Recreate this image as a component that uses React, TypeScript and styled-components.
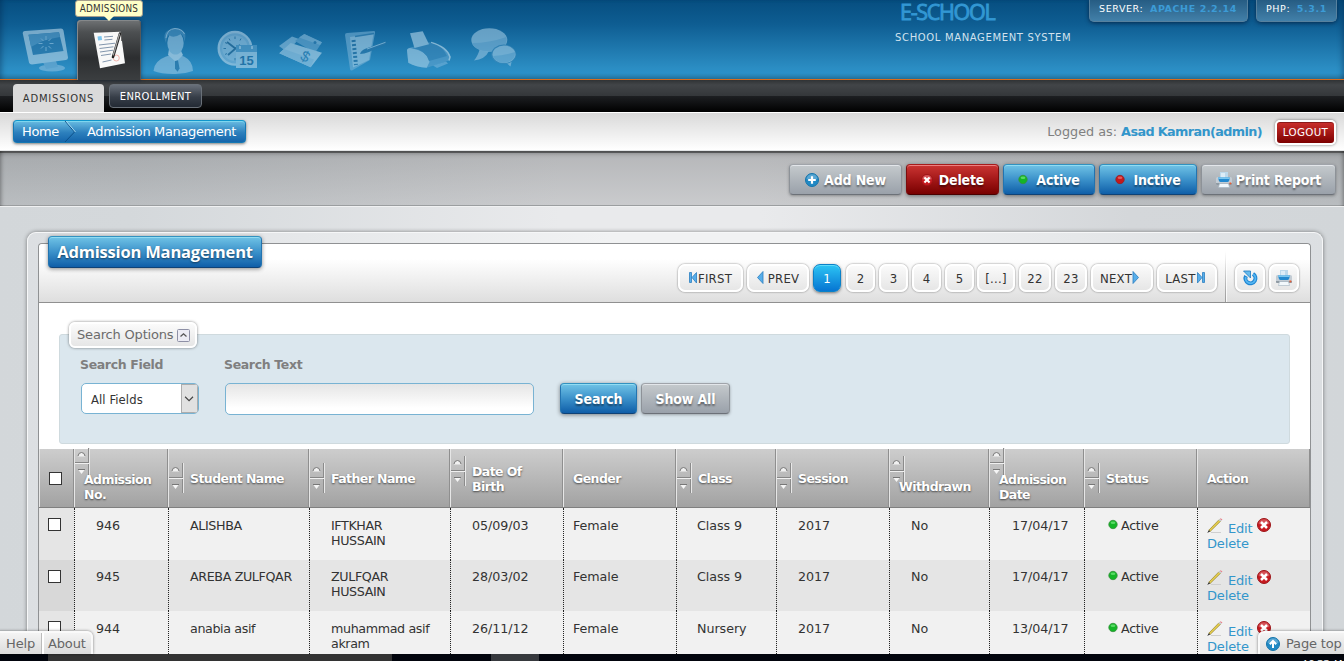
import React from "react";
import styled, { createGlobalStyle, css } from "styled-components";

const GlobalStyle = createGlobalStyle`
  * { box-sizing: border-box; }
  html, body { margin: 0; padding: 0; overflow: hidden; }
  body { font-family: "DejaVu Sans", Verdana, sans-serif; font-size: 13px; color: #333; }
`;

const Screen = styled.div`
  width: 1344px;
  height: 661px;
  overflow: hidden;
  display: flex;
  flex-direction: column;
  background: linear-gradient(90deg, #d3d7da 0, #d4d8db 130px, #e9eaec 560px, #e9eaec 760px, #d4d7da 1130px, #d2d6d9 100%);
`;

/* ---------- Header ---------- */

const Header = styled.header`
  height: 80px;
  flex: none;
  display: flex;
  padding-left: 13px;
  border-bottom: 1px solid #d86c1c;
  background: linear-gradient(#064e80 0, #0e5d92 24px, #2b8dc3 68px, #2b90c8 73px, #27769f 79px);
  box-shadow: inset 5px 0 5px -3px rgba(0, 30, 60, 0.35), inset -5px 0 5px -3px rgba(0, 30, 60, 0.35);
`;

const NavItem = styled.div<{ $active?: boolean }>`
  position: relative;
  width: 64px;
  height: 60px;
  margin-top: 20px;
  svg { display: block; opacity: ${(p) => (p.$active ? 1 : 0.56)}; }
  ${(p) =>
    p.$active &&
    css`
      background: linear-gradient(#707375 0, #4d5052 12px, #2c2e30 38px, #3b3e40 60px);
      border-radius: 4px 4px 0 0;
      box-shadow: inset 1px 1px 0 #85888a, inset -1px 0 0 #55585a, 0 0 4px rgba(0, 20, 50, 0.5);
    `}
`;

const Tooltip = styled.div`
  position: absolute;
  left: -2px;
  top: -20px;
  width: 68px;
  height: 17px;
  border: 1px solid #a59d8c;
  border-radius: 3px;
  background: #ffffc8;
  color: #333;
  font: 9.8px/15px "DejaVu Sans Condensed", "DejaVu Sans", sans-serif;
  font-stretch: condensed;
  letter-spacing: 0.25px;
  text-align: center;
  white-space: nowrap;
  z-index: 2;
  &::after {
    content: "";
    position: absolute;
    left: 28px;
    top: 15px;
    border: 5px solid transparent;
    border-bottom: 0;
    border-top-color: #ffffc8;
  }
`;

const Brand = styled.div`
  margin-left: 370px;
  width: 194px;
  flex: none;
  display: flex;
  flex-direction: column;
  color: #d2e2ee;
  font-size: 10px;
  line-height: 14px;
  white-space: nowrap;
  letter-spacing: 0.65px;
`;

const BrandName = styled.div`
  margin: 0 0 7px 5px;
  font: 21.5px/24px "Open Sans", sans-serif;
  color: #3297d3;
  letter-spacing: -1.3px;
  -webkit-text-stroke: 0.9px #3297d3;
`;

const Info = styled.div<{ $w: number }>`
  width: ${(p) => p.$w}px;
  height: 22px;
  flex: none;
  margin-right: 8px;
  border: 1px solid #57819e;
  border-top: 0;
  border-radius: 0 0 5px 5px;
  background: linear-gradient(#265c83, #4280a9);
  box-shadow: 0 1px 4px rgba(0, 20, 50, 0.7);
  color: #fff;
  font-size: 9.5px;
  line-height: 17px;
  padding-left: 9px;
  letter-spacing: 0.6px;
  white-space: nowrap;
  b { color: #3c9bd6; margin-left: 3px; }
`;

const TabBar = styled.nav`
  height: 32px;
  flex: none;
  display: flex;
  padding-left: 13px;
  background: linear-gradient(#303335 0, #424548 5px, #34373a 16px, #1d1f22 16px, #000 32px);
`;

const Tab = styled.div<{ $active?: boolean }>`
  font-size: 10px;
  text-align: center;
  ${(p) =>
    p.$active
      ? css`
          width: 91px;
          margin-top: 4px;
          height: 28px;
          line-height: 29px;
          letter-spacing: 0.8px;
          border-radius: 4px 4px 0 0;
          background: #dadada;
          color: #333;
        `
      : css`
          width: 93px;
          height: 24px;
          margin: 4px 0 0 5px;
          line-height: 23px;
          letter-spacing: 0.3px;
          border: 1px solid #697078;
          border-radius: 4px;
          background: linear-gradient(#69707a, #373e48 55%, #232a34);
          color: #fff;
        `}
`;

const CrumbBar = styled.div`
  height: 39px;
  flex: none;
  display: flex;
  align-items: flex-start;
  padding: 8px 8px 0 13px;
  border-top: 1px solid #fff;
  border-bottom: 1px solid #e3e5e6;
  background: linear-gradient(#d9d9d9, #fff);
`;

const Crumbs = styled.div`
  height: 23px;
  width: 233px;
  margin-top: -1px;
  display: flex;
  border: 1px solid #1478b4;
  border-top-color: #1196cc;
  border-radius: 4px;
  background: linear-gradient(#69bce2, #2d80bd 55%, #1465ab);
  box-shadow: 0 1px 3px rgba(0, 0, 0, 0.5), inset 0 1px 0 #7ed6ef;
  color: #fff;
  line-height: 21px;
  padding-left: 8px;
  white-space: nowrap;
  letter-spacing: -0.36px;
  span { width: 42px; }
  svg { flex: none; margin: 0 11px 0 0; }
`;

const Logged = styled.div`
  margin-left: auto;
  color: #808080;
  line-height: 21px;
  font-size: 12.8px;
  letter-spacing: 0;
  b { color: #3396cb; letter-spacing: -0.62px; }
`;

const Logout = styled.div`
  margin: -1px 0 0 13px;
  width: 61px;
  height: 25px;
  border: 2px solid #fff;
  border-radius: 5px;
  background: linear-gradient(#cb302d, #7d0000);
  box-shadow: 0 0 3px rgba(0, 0, 0, 0.5), inset 0 1px 0 #8a1a1a;
  color: #fff;
  font-size: 10.3px;
  line-height: 21px;
  text-align: center;
  letter-spacing: 0.35px;
`;

const Toolbar = styled.div`
  height: 56px;
  flex: none;
  display: flex;
  justify-content: flex-end;
  gap: 4px;
  padding: 13px 8px 0 0;
  border-bottom: 1px solid #f0f1f2;
  background: linear-gradient(#6d6f70 0, #6d6f70 2px, transparent 2px),
    linear-gradient(rgba(80, 82, 85, 0.34), rgba(120, 122, 125, 0.28) 54px, #9da0a2 54px);
  box-shadow: inset 0 6px 5px -4px rgba(0, 0, 0, 0.35), inset 5px 0 4px -4px rgba(0, 0, 0, 0.35), inset -5px 0 4px -4px rgba(0, 0, 0, 0.35);
`;

type Tone = "grey" | "red" | "blue";

const tones: Record<Tone, ReturnType<typeof css>> = {
  grey: css`
    border-color: #a0a4aa #8d9298 #6c7178;
    background: linear-gradient(#c5cacd, #afb5bb 50%, #9aa1aa);
    box-shadow: inset 0 1px 0 #e3e6ea, 0 1px 3px rgba(0, 0, 0, 0.3);
  `,
  red: css`
    border-color: #a61c1c #7c0d0d #4a0000;
    background: linear-gradient(#cb3533, #a31818 50%, #780000);
    box-shadow: inset 0 1px 0 #ec8080, 0 1px 4px rgba(0, 0, 0, 0.45);
  `,
  blue: css`
    border-color: #3292c0 #2374b0 #0f4276;
    background: linear-gradient(#70c3e6, #3b91ca 50%, #0f5ea8);
    box-shadow: inset 0 1px 0 #92dcf2, 0 1px 4px rgba(0, 0, 0, 0.45);
  `,
};

const Button = styled.div<{ $tone: Tone; $w: number; $iconGap?: number }>`
  width: ${(p) => p.$w}px;
  height: 31px;
  flex: none;
  display: flex;
  align-items: center;
  justify-content: center;
  gap: ${(p) => p.$iconGap ?? 5}px;
  border: 1px solid;
  border-radius: 4px;
  color: #fff;
  font: bold 14px "DejaVu Sans Condensed", "DejaVu Sans", sans-serif;
  font-stretch: condensed;
  letter-spacing: -0.15px;
  text-shadow: 0 2px 2px rgba(0, 0, 0, 0.45);
  white-space: nowrap;
  svg { flex: none; }
  ${(p) => tones[p.$tone]}
`;

/* ---------- Widget ---------- */

const Widget = styled.section`
  margin: 25px 21px 0 27px;
  height: 422px;
  flex: none;
  padding: 10px 11px 0 10px;
  border: 1px solid #f6f7f8;
  border-bottom: 0;
  border-radius: 9px 9px 0 0;
  background: linear-gradient(90deg, #dcdfe2, #f1f2f3 45%, #f1f2f3 60%, #dcdfe2);
  box-shadow: 0 0 4px rgba(0, 0, 0, 0.45);
`;

const Panel = styled.div`
  height: 411px;
  border: 1px solid #8f9193;
  border-bottom: 0;
  border-radius: 4px 4px 0 0;
  background: #fff;
  overflow: visible;
`;

const PanelHead = styled.div`
  height: 59px;
  display: flex;
  align-items: flex-start;
  border-bottom: 1px solid #909090;
  border-radius: 4px 4px 0 0;
  background: linear-gradient(#fff 15px, #dedede);
`;

const Title = styled.h1`
  margin: -8px 0 0 9px;
  width: 214px;
  height: 32px;
  border: 1px solid;
  border-radius: 4px;
  color: #fff;
  font: bold 16.5px/30px "Open Sans", "Trebuchet MS", sans-serif;
  text-align: center;
  letter-spacing: -0.18px;
  white-space: nowrap;
  text-shadow: 0 1px 2px rgba(0, 0, 0, 0.5);
  ${tones.blue}
`;

const Pager = styled.div`
  margin: 20px 8px 0 auto;
  display: flex;
`;

const Page = styled.div<{ $w: number; $mr?: number; $pr?: number; $current?: boolean }>`
  width: ${(p) => p.$w}px;
  height: 28px;
  margin-right: ${(p) => p.$mr ?? 4}px;
  padding-right: ${(p) => p.$pr ?? 0}px;
  display: flex;
  align-items: center;
  justify-content: center;
  border: 2px solid #fff;
  border-radius: 7px;
  background: linear-gradient(#fafafa, #e6e6e6);
  box-shadow: 0 0 2px rgba(0, 0, 0, 0.55);
  color: #333;
  font: 13px "DejaVu Sans Condensed", "DejaVu Sans", sans-serif;
  font-stretch: condensed;
  letter-spacing: 0.25px;
  white-space: nowrap;
  svg { flex: none; }
  ${(p) =>
    p.$current &&
    css`
      border: 1px solid #0a81c8;
      background: linear-gradient(#2cc4f4, #0675d2);
      box-shadow: inset 0 1px 0 #5edafa, 0 1px 3px rgba(0, 0, 0, 0.5);
      color: #fff;
    `}
`;

const HeadTools = styled.div`
  height: 58px;
  width: 85px;
  display: flex;
  gap: 4px;
  padding: 20px 0 0 9px;
  border-left: 1px solid;
  border-image: linear-gradient(transparent 8px, #999) 1;
  box-shadow: inset 1px 0 0 rgba(255, 255, 255, 0.8);
`;

const SearchBox = styled.div`
  margin: 31px 20px 5px;
  height: 110px;
  border: 1px solid #cfdade;
  border-radius: 3px;
  background: #dbe7ee;
  padding: 0 0 0 10px;
`;

const Legend = styled.div`
  margin: -13px 0 0 -1px;
  width: 128px;
  height: 26px;
  display: flex;
  align-items: center;
  gap: 4px;
  padding-left: 6px;
  border: 2px solid #fff;
  border-radius: 6px;
  background: linear-gradient(#fbfbfb, #e6e6e6);
  box-shadow: 0 0 3px rgba(0, 0, 0, 0.5);
  color: #6b6b6b;
  line-height: 20px;
  white-space: nowrap;
  letter-spacing: -0.18px;
`;

const Fields = styled.div`
  display: flex;
  align-items: flex-start;
  margin: 8px 0 0 10px;
`;

const Field = styled.div<{ $w: number }>`
  width: ${(p) => p.$w}px;
  color: #7f7f7f;
  font-weight: bold;
  font-size: 12.5px;
  line-height: 17px;
  letter-spacing: -0.35px;
`;

const Select = styled.div`
  margin: 10px 0 0 1px;
  width: 118px;
  height: 31px;
  display: flex;
  justify-content: space-between;
  border: 1px solid #78b3d3;
  border-radius: 5px;
  overflow: hidden;
  background: #fff;
  color: #333;
  font: 12.9px/31px "DejaVu Sans Condensed", "DejaVu Sans", sans-serif;
  font-stretch: condensed;
  letter-spacing: 0.1px;
  padding-left: 9px;
  svg { background: #e1e1e1; border: 1px solid #adadad; }
`;

const TextInput = styled.div`
  margin: 10px 0 0 1px;
  width: 309px;
  height: 32px;
  border: 1px solid #78b3d3;
  border-radius: 5px;
  background: linear-gradient(#e5e5e5, #fff 80%);
`;

const FormButtons = styled.div`
  display: flex;
  gap: 4px;
  margin: 27px 0 0 26px;
`;

/* ---------- Table ---------- */

const columns = "35px 94px 141px 141px 113px 113px 100px 113px 100px 95px 113px 113px";

const HeadRow = styled.div`
  display: grid;
  grid-template-columns: ${columns};
  width: 1271px;
  height: 59px;
  border-bottom: 1px solid #7f7f7f;
  background: linear-gradient(#cdcdcd, #a2a2a2);
`;

const HeadCell = styled.div`
  display: flex;
  align-items: flex-start;
  border-left: 1px solid #e6e6e6;
  border-right: 1px solid #8f8f8f;
  color: #fff;
  font-weight: bold;
  font-size: 12.5px;
  line-height: 15px;
  letter-spacing: -0.58px;
  text-shadow: 0 1px 2px rgba(0, 0, 0, 0.6);
`;

const HeadLabel = styled.div<{ $top: number; $left: number }>`
  margin: ${(p) => `${p.$top}px 0 0 ${p.$left}px`};
  white-space: pre-line;
`;

const Sorter = styled.div<{ $top: number }>`
  margin-top: ${(p) => p.$top}px;
  width: 15px;
  height: 30px;
  flex: none;
  border-right: 1px solid #e8e8e8;
  box-shadow: inset -1px 0 0 #8b8b8b;
  svg { display: block; }
`;

const Row = styled.div<{ $h: number; $alt?: boolean }>`
  display: grid;
  grid-template-columns: ${columns};
  width: 1271px;
  height: ${(p) => p.$h}px;
  overflow: hidden;
  background: ${(p) => (p.$alt ? "#e5e5e5" : "#f1f1f1")};
  & > :first-child { background: ${(p) => (p.$alt ? "#d8d8d8" : "#e5e5e5")}; }
`;

const Cell = styled.div<{ $left: number; $top?: number; $tight?: boolean }>`
  padding: ${(p) => p.$top ?? 10}px 0 0 ${(p) => p.$left}px;
  line-height: 15px;
  font-size: 12.7px;
  letter-spacing: ${(p) => (p.$tight ? -0.38 : -0.05)}px;
  white-space: pre-line;
  border-left: 1px dotted #222;
  &:first-child { border-left: 0; }
`;

const CheckBox = styled.div<{ $x?: number; $y?: number }>`
  width: 13px;
  height: 13px;
  margin: ${(p) => `${p.$y ?? 0}px 0 0 ${p.$x ?? 0}px`};
  border: 1px solid #333;
  background: #fff;
`;

const StatusLine = styled.div`
  display: flex;
  gap: 3px;
  letter-spacing: -0.3px;
  svg { margin-top: 1px; }
`;

const Actions = styled.div`
  color: #3396cb;
  font-size: 13px;
  letter-spacing: -0.15px;
`;

const ActionLine = styled.div`
  display: flex;
  height: 18px;
  span { margin: 3px 5px 0 5px; letter-spacing: -0.2px; }
`;

/* ---------- Overlays and bottom strip ---------- */

const Dock = styled.div<{ $side: "left" | "right" }>`
  position: absolute;
  top: 631px;
  ${(p) => (p.$side === "left" ? "left: -2px;" : "left: 1258px;")}
  width: ${(p) => (p.$side === "left" ? 95 : 90)}px;
  height: 23px;
  display: flex;
  align-items: center;
  border: 2px solid #fafafa;
  border-bottom: 0;
  border-radius: ${(p) => (p.$side === "left" ? "0 6px 0 0" : "6px 0 0 0")};
  background: linear-gradient(#f4f4f4, #dcdcdc);
  box-shadow: 0 0 3px rgba(0, 0, 0, 0.5);
  color: #666;
  letter-spacing: -0.15px;
  white-space: nowrap;
  svg { display: block; }
`;

const DockLink = styled.div<{ $w?: number; $divided?: boolean }>`
  ${(p) => p.$w && `width: ${p.$w}px;`}
  padding-left: 6px;
  line-height: 21px;
  ${(p) => p.$divided && "border-left: 1px solid #bbb; box-shadow: inset 2px 0 0 #fff;"}
`;

const Taskbar = styled.footer`
  height: 7px;
  flex: none;
  display: flex;
  overflow: hidden;
  background: #02050d;
  color: #fff;
`;

const TaskSlot = styled.div<{ $ml: number; $w: number; $color: string }>`
  margin-left: ${(p) => p.$ml}px;
  width: ${(p) => p.$w}px;
  height: 7px;
  background: ${(p) => p.$color};
`;

const Clock = styled.div`
  margin: 3px 0 0 auto;
  width: 42px;
  white-space: nowrap;
  font: 11.5px/14px "Open Sans", sans-serif;
  letter-spacing: -0.4px;
`;

/* ---------- Icons ---------- */

const Nav = ({ children }: { children: React.ReactNode }) => (
  <svg width="64" height="60" viewBox="0 0 64 60">{children}</svg>
);

const MonitorIcon = () => (
  <Nav>
    <ellipse cx="39" cy="48" rx="13" ry="3.6" fill="#8fc0e0" />
    <path d="M29 40L42 38 45 47 33 49Z" fill="#7fb4d8" />
    <path d="M12 11L48 8.500Q50 8.500 50.500 10.500L55 37.500Q55 39.500 53 40L19 44.500Q16.500 44.500 16 42.500L9.800 13.500Q9.500 11.200 12 11Z" fill="#c4deee" />
    <path d="M15.500 14.700L46 12.300 50.500 31 20 35Z" fill="#2f7aac" />
    <path d="M15.500 14.700L46 12.300 47 17Q31 19 18 27Z" fill="#5d9dc7" />
    <g stroke="#a9d0e8" strokeWidth="1">
      <path d="M33 16v4M33 27v4M25.500 23.500h4M36.500 23.500h4M28 18.500l2.500 2.500M35.500 26l2.500 2.500M28 28.500l2.500-2.500M35.500 21l2.500-2.500" />
    </g>
  </Nav>
);

const DocumentIcon = () => (
  <Nav>
    <path d="M16.700 12.700L43.700 11.700 48 43.300 23 48.300Z" fill="#f8f8f8" />
    <path d="M20.500 16.500l4-.4.600 4-4 .5Z" fill="#7cc6ef" />
    <path d="M27 17l9-.7M27.400 20l8-.7M22 25l16-1.800M22.500 28.500l14-1.700M23 32l13-1.800M24 35.500l10-1.500M25.500 42l9-2" stroke="#8296ad" strokeWidth="1" />
    <circle cx="39.300" cy="38" r="3" fill="none" stroke="#f2b3ab" />
    <path d="M43 13.500L36 37" stroke="#222" strokeWidth="2.600" strokeLinecap="round" />
    <path d="M42.500 14L36.300 35" stroke="#a5a5a5" strokeWidth="1.200" strokeLinecap="round" />
    <path d="M44.500 13v8" stroke="#555" strokeWidth=".8" />
  </Nav>
);

const PersonIcon = () => (
  <Nav>
    <path d="M12.500 51Q13 41 25 36.500L34 34 43 36.500Q52 41 52 51 42 54.500 32 54 20 54 12.500 51Z" fill="#9cc8e4" />
    <path d="M27 35L35 42 42 35 39 29H28Z" fill="#d5e8f4" />
    <path d="M34 41l3-.8 1.500 8-1.800 3.500-2.700-3Z" fill="#2f75a5" />
    <ellipse cx="34.500" cy="23" rx="8.200" ry="11.500" fill="#a5cde6" />
    <path d="M25 23Q20 11 31 9 40 6.500 44 13 45 15 43.500 22 43 16 40 14 32 19 28 15 25.500 17 25 23Z" fill="#4f93bf" />
    <path d="M25 18Q26 9 34 8.500 41 9 43.500 14" stroke="#c4dff0" fill="none" />
  </Nav>
);

const ClockIcon = () => (
  <Nav>
    <circle cx="30" cy="28.300" r="16.300" fill="#8ebedd" stroke="#c3ddee" strokeWidth="2.400" />
    <circle cx="30" cy="28.300" r="12.800" fill="#a6cde6" />
    <path d="M30 16.500v2.500M18.500 28.500h2.500M30 38v2.500M24 18.500l1 2M36 18.500l-1 2M20 22.500l2 1M20 34.500l2-1" stroke="#33749f" />
    <path d="M22 22l8.500 6.500L35 25M30.500 28.500L23 35" stroke="#28658f" strokeWidth="1.800" fill="none" />
    <rect x="31" y="25" width="21" height="23" fill="#b9d9ec" />
    <rect x="31" y="25" width="21" height="7" fill="#5da0ca" />
    <path d="M35 26v3M47 26v3" stroke="#d9ecf7" strokeWidth="1.500" />
    <text x="41.500" y="44.500" textAnchor="middle" fontSize="13" fontWeight="bold" fontFamily="Liberation Sans, sans-serif" fill="#1c6698">15</text>
  </Nav>
);

const MoneyIcon = () => (
  <Nav>
    <path d="M10 26L23 16.500 30 19 18 32Z" fill="#95c3e0" />
    <path d="M26 21L35.300 14 53 22.300 46 33Z" fill="#6ca9d0" />
    <path d="M30 17.500L35.300 14 53 22.300 51 25Z" fill="#92c1de" />
    <circle cx="46" cy="22.500" r="1.500" fill="#2e78aa" />
    <path d="M10.300 33.300L21.700 23 53 32.700 41.700 47.300Z" fill="#c1deef" />
    <path d="M15 29L45 39.500 41.700 47.300 10.300 33.300Z" fill="#a9d0e8" />
    <text x="32" y="42" fontSize="15" fontFamily="Liberation Sans, sans-serif" fill="#2f7eb2" transform="rotate(28 37 37)">$</text>
  </Nav>
);

const BookIcon = () => (
  <Nav>
    <path d="M12 15Q12 13 14 13L41 11Q42.500 11 42 13L37 40 19 50.500Q17.500 51 17 49Z" fill="#79b2d6" />
    <path d="M17 17L40.500 14 36 40 20 47.500Z" fill="#b5d7eb" />
    <path d="M22 16.500L41 13.500" stroke="#3a83b3" strokeWidth="1.500" />
    <path d="M20.500 20l2.500 25" stroke="#286f9f" strokeWidth="4" strokeDasharray="2 2" />
    <path d="M27 34Q28 30 33 28.500L53 21.500Q54 23 52 24.500L36 32Q31 34 27 34Z" fill="#2a74a6" />
    <path d="M34 29L52.500 22.300" stroke="#b4d7ec" />
  </Nav>
);

const PrinterNavIcon = () => (
  <Nav>
    <path d="M10 31Q10 29 12 28L31 22.500Q34 22 38 24 52 30 53.500 36.500L53 40 45 43 29.700 47.700Q20 47 11.300 42.700Z" fill="#61a3ce" />
    <path d="M10 30Q10 28.500 13 28 31 31 32.500 42L29.700 47.700Q19 47 11.300 42.700Z" fill="#b6d9ed" />
    <path d="M34 22.500Q50 27 53 37L52 40.500" stroke="#d2e7f3" strokeWidth="1.500" fill="none" />
    <path d="M15 28Q29 30 32 41L50 36Q46 26 34 23Z" fill="#3e88b9" />
    <path d="M13 13.300L25.700 11.300 32 24.300 17.500 28Z" fill="#bcdcef" />
    <path d="M36 45.500L49 41.500 51 43.500 40 48Z" fill="#7cb6dc" />
  </Nav>
);

const ChatIcon = () => (
  <Nav>
    <path d="M19 28Q17 36 13 40.500 24 39.500 28 31Z" fill="#9dc8e3" />
    <ellipse cx="28.300" cy="20" rx="18" ry="11.800" fill="#a7cfe7" />
    <path d="M11 23Q28 23 45.500 17 47 28 34 31 15 33 11 23Z" fill="#88bbdc" />
    <path d="M43 41L49.500 46.500 51 40Z" fill="#9dc8e3" />
    <ellipse cx="42.700" cy="34.300" rx="12.500" ry="9.700" fill="#3f89b9" />
    <ellipse cx="43" cy="34.300" rx="11.500" ry="8.700" fill="#acd2e9" />
    <path d="M32 36Q42 36 54 32 55 41 43 43 34 42 32 36Z" fill="#86bbdc" />
  </Nav>
);

const BadgeIcon = ({ kind, size = 14 }: { kind: "plus" | "cross" | "up"; size?: number }) => (
  <svg width={size} height={size} viewBox="0 0 14 14">
    <circle cx="7" cy="7" r="6.500" fill={kind === "cross" ? "#c71a20" : "#2089c4"} stroke={kind === "cross" ? "#9c1519" : "#1674ab"} />
    <path d="M1.500 6Q2 1.500 7 1.300 12 1.500 12.500 6 7 7.500 1.500 6Z" fill="#fff" opacity=".25" />
    {kind === "plus" && <path d="M7 3.200v7.600M3.200 7h7.600" stroke="#fff" strokeWidth="2.200" />}
    {kind === "cross" && <path d="M4 4l6 6M10 4L4 10" stroke="#fff" strokeWidth="2.500" />}
    {kind === "up" && <path d="M7 11V4.500M3.800 7.200L7 4l3.200 3.200" stroke="#fff" strokeWidth="2" fill="none" />}
  </svg>
);

const Dot = ({ color }: { color: "green" | "red" }) => (
  <svg width="10" height="11" viewBox="0 0 10 11">
    <circle cx="5" cy="5.500" r="4.200" fill={color === "green" ? "#14b527" : "#c4181c"} stroke={color === "green" ? "#37913d" : "#922024"} strokeWidth=".8" />
    <ellipse cx="5" cy="3.800" rx="2.400" ry="1.300" fill={color === "green" ? "#58d965" : "#e4585a"} />
  </svg>
);

const PrintIcon = () => (
  <svg width="16" height="16" viewBox="0 0 16 16">
    <path d="M4 0H12V6H4Z" fill="#bcd9ec" />
    <path d="M5 1H9V6H5Z" fill="#dcecf7" />
    <path d="M0 6.500Q0 5 1.500 5H3.500V8.500H12.500V5H14.500Q16 5 16 6.500V12Q16 13 15 13H1Q0 13 0 12Z" fill="#c3ccd4" />
    <path d="M0 11H16V12Q16 13 15 13H1Q0 13 0 12Z" fill="#8f9aa3" />
    <path d="M2 5.500H14L13 9Q12.500 10 11.500 10H4.500Q3.500 10 3 9Z" fill="#2389cf" />
    <path d="M2 5.500H14L13.600 7H2.400Z" fill="#79c6f0" />
    <path d="M3.500 11.500H12.500L13.500 15.500H2.500Z" fill="#f2f8fc" stroke="#a3b4c0" strokeWidth=".6" />
    <rect x="13.500" y="10.500" width="1.800" height="1.800" fill="#ee5a2e" />
  </svg>
);

const RefreshIcon = () => (
  <svg width="16" height="16" viewBox="0 0 16 16">
    <path d="M11 4A5 5 0 1 1 4 6" fill="none" stroke="#1f86d2" strokeWidth="4" />
    <path d="M11.200 4.200A4.900 4.900 0 1 1 3.800 7" fill="none" stroke="#56b6f2" strokeWidth="1.800" />
    <path d="M1.500 1H8.500V8Z" fill="#66bbee" stroke="#1e78bd" strokeWidth=".8" />
  </svg>
);

const ArrowIcon = ({ dir, end }: { dir: "left" | "right"; end?: boolean }) => (
  <svg width={end ? 10 : 8} height="14" viewBox={end ? "0 0 10 14" : "0 0 8 14"}>
    <g transform={dir === "left" ? undefined : end ? "translate(10 0) scale(-1 1)" : "translate(8 0) scale(-1 1)"} stroke="#2b7fc0" strokeWidth=".8" fill="#58aeea">
      {end ? (
        <>
          <path d="M1.500 1.500h2v10h-2Z" />
          <path d="M8.500 1.500v10.500L4 6.500Z" />
        </>
      ) : (
        <path d="M7 0.500v12L1.500 6.500Z" />
      )}
    </g>
  </svg>
);

const CollapseIcon = () => (
  <svg width="13" height="13" viewBox="0 0 13 13">
    <rect x=".5" y=".5" width="12" height="12" rx="1" fill="#ececf4" stroke="#8e90a6" />
    <path d="M3.500 7.500L6.500 4.800 9.500 7.500" stroke="#555" fill="none" strokeWidth="1.300" />
  </svg>
);

const SortArrows = () => (
  <svg width="14" height="30" viewBox="0 0 14 30">
    <path d="M3 8.500Q3.500 4.500 6.500 4.500 9.500 4.500 10 8.500Z" fill="#f1f1f1" />
    <path d="M3 8Q3.500 4.500 6.500 4.500 9.500 4.500 10 8" stroke="#777" fill="none" />
    <path d="M0 14.500h14" stroke="#868686" />
    <path d="M0 15.500h14" stroke="#f0f0f0" />
    <path d="M3.500 22L9.500 22 6.500 26Z" fill="#f5f5f5" />
    <path d="M3 21.500h7" stroke="#777" />
  </svg>
);

const PencilIcon = () => (
  <svg width="16" height="16" viewBox="0 0 16 16">
    <path d="M4 14.500h10" stroke="#cfcfcf" />
    <path d="M1.800 12.200L12 1.700 13.800 3 3.300 13.300Z" fill="#e6cf4c" stroke="#948029" strokeWidth=".7" />
    <path d="M12.700 1L13.700.2 15.400 1.500 14.700 2.600Z" fill="#ea7f88" />
    <path d="M11.500 2.200L12.700 1 14.700 2.600 13.500 3.600Z" fill="#c7cfd4" />
    <path d="M1.800 12.200L3.300 13.300.3 15Z" fill="#222" />
  </svg>
);

/* ---------- Content ---------- */

const headings: { label: string; left: number; top?: number; sort?: number }[] = [
  { label: "Admission\nNo.", left: -6, top: 23, sort: -1 },
  { label: "Student Name", left: 6, sort: 14 },
  { label: "Father Name", left: 6, sort: 14 },
  { label: "Date Of\nBirth", left: 6, top: 15, sort: 7 },
  { label: "Gender", left: 9 },
  { label: "Class", left: 6, sort: 14 },
  { label: "Session", left: 6, sort: 14 },
  { label: "Withdrawn", left: -6, top: 30, sort: 7 },
  { label: "Admission\nDate", left: -6, top: 23, sort: -1 },
  { label: "Status", left: 6, sort: 14 },
  { label: "Action", left: 9 },
];

const cellInsets = [21, 21, 21, 21, 9, 20, 21, 21, 22];

const students = [
  { height: 52, cells: ["946", "ALISHBA", "IFTKHAR\nHUSSAIN", "05/09/03", "Female", "Class 9", "2017", "No", "17/04/17"] },
  { height: 51, cells: ["945", "AREBA ZULFQAR", "ZULFQAR\nHUSSAIN", "28/03/02", "Female", "Class 9", "2017", "No", "17/04/17"] },
  { height: 43, cells: ["944", "anabia asif", "muhammad asif\nakram", "26/11/12", "Female", "Nursery", "2017", "No", "13/04/17"] },
];

const numberedPages = [
  { label: "2", w: 29, mr: 4 },
  { label: "3", w: 29, mr: 4 },
  { label: "4", w: 29, mr: 4 },
  { label: "5", w: 29, mr: 3 },
  { label: "[...]", w: 38 },
  { label: "22", w: 32 },
  { label: "23", w: 32 },
];

export default function App() {
  return (
    <Screen>
      <GlobalStyle />
      <Header>
        <NavItem><MonitorIcon /></NavItem>
        <NavItem $active>
          <Tooltip>ADMISSIONS</Tooltip>
          <DocumentIcon />
        </NavItem>
        <NavItem><PersonIcon /></NavItem>
        <NavItem><ClockIcon /></NavItem>
        <NavItem><MoneyIcon /></NavItem>
        <NavItem><BookIcon /></NavItem>
        <NavItem><PrinterNavIcon /></NavItem>
        <NavItem><ChatIcon /></NavItem>
        <Brand>
          <BrandName>E-SCHOOL</BrandName>
          SCHOOL MANAGEMENT SYSTEM
        </Brand>
        <Info $w={159}>SERVER: <b>APACHE 2.2.14</b></Info>
        <Info $w={81}>PHP: <b>5.3.1</b></Info>
      </Header>

      <TabBar>
        <Tab $active>ADMISSIONS</Tab>
        <Tab>ENROLLMENT</Tab>
      </TabBar>

      <CrumbBar>
        <Crumbs>
          <span>Home</span>
          <svg width="12" height="21" viewBox="0 0 12 21">
            <path d="M1 0L10.500 11 1 21" stroke="#0c4f88" fill="none" />
            <path d="M2 0L11.500 11" stroke="#a5d9f0" fill="none" />
          </svg>
          Admission Management
        </Crumbs>
        <Logged>Logged as: <b>Asad Kamran(admin)</b></Logged>
        <Logout>LOGOUT</Logout>
      </CrumbBar>

      <Toolbar>
        <Button $tone="grey" $w={113}><BadgeIcon kind="plus" />Add New</Button>
        <Button $tone="red" $w={93} $iconGap={6}><BadgeIcon kind="cross" size={12} />Delete</Button>
        <Button $tone="blue" $w={92} $iconGap={8}><Dot color="green" />Active</Button>
        <Button $tone="blue" $w={98} $iconGap={8}><Dot color="red" />Inctive</Button>
        <Button $tone="grey" $w={135} $iconGap={4}><PrintIcon />Print Report</Button>
      </Toolbar>

      <Widget>
        <Panel>
          <PanelHead>
            <Title>Admission Management</Title>
            <Pager>
              <Page $w={65} $pr={1}><ArrowIcon dir="left" end />FIRST</Page>
              <Page $w={62} $pr={1}><ArrowIcon dir="left" />&nbsp;PREV</Page>
              <Page $w={28} $mr={5} $current>1</Page>
              {numberedPages.map((page) => (
                <Page key={page.label} $w={page.w} $mr={page.mr}>{page.label}</Page>
              ))}
              <Page $w={62} $pr={4}>NEXT<ArrowIcon dir="right" /></Page>
              <Page $w={60} $pr={3} $mr={0}>LAST<ArrowIcon dir="right" end /></Page>
            </Pager>
            <HeadTools>
              <Page $w={30} $mr={0}><RefreshIcon /></Page>
              <Page $w={30} $mr={0}><PrintIcon /></Page>
            </HeadTools>
          </PanelHead>

          <SearchBox>
            <Legend>Search Options<CollapseIcon /></Legend>
            <Fields>
              <Field $w={144}>
                Search Field
                <Select>
                  All Fields
                  <svg width="17" height="29" viewBox="0 0 17 29">
                    <path d="M3.500 12.500L8 17 12.500 12.500" stroke="#444" strokeWidth="1.300" fill="none" />
                  </svg>
                </Select>
              </Field>
              <Field $w={310}>
                Search Text
                <TextInput />
              </Field>
              <FormButtons>
                <Button $tone="blue" $w={77}>Search</Button>
                <Button $tone="grey" $w={89}>Show All</Button>
              </FormButtons>
            </Fields>
          </SearchBox>

          <HeadRow>
            <HeadCell><CheckBox $x={9} $y={23} /></HeadCell>
            {headings.map((heading) => (
              <HeadCell key={heading.label}>
                {heading.sort !== undefined && <Sorter $top={heading.sort}><SortArrows /></Sorter>}
                <HeadLabel $top={heading.top ?? 22} $left={heading.left}>{heading.label}</HeadLabel>
              </HeadCell>
            ))}
          </HeadRow>
          {students.map((student, index) => {
            const textTop = index === 1 ? 9 : 10;
            return (
              <Row key={student.cells[0]} $h={student.height} $alt={index === 1}>
                <Cell $left={9}><CheckBox /></Cell>
                {student.cells.map((text, i) => (
                  <Cell key={i} $left={cellInsets[i]} $top={textTop} $tight={i === 1 || i === 2}>{text}</Cell>
                ))}
                <Cell $left={23} $top={textTop}>
                  <StatusLine><Dot color="green" />Active</StatusLine>
                </Cell>
                <Cell $left={9}>
                  <Actions>
                    <ActionLine><PencilIcon /><span>Edit</span><BadgeIcon kind="cross" /></ActionLine>
                    Delete
                  </Actions>
                </Cell>
              </Row>
            );
          })}
        </Panel>
      </Widget>

      <Taskbar>
        <TaskSlot $ml={48} $w={344} $color="#333" />
        <TaskSlot $ml={99} $w={48} $color="#36393d" />
        <Clock>10:33 AM</Clock>
      </Taskbar>

      <Dock $side="left">
        <DockLink $w={41}>Help</DockLink>
        <DockLink $divided>About</DockLink>
      </Dock>
      <Dock $side="right">
        <DockLink><BadgeIcon kind="up" /></DockLink>
        <DockLink>Page top</DockLink>
      </Dock>
    </Screen>
  );
}
